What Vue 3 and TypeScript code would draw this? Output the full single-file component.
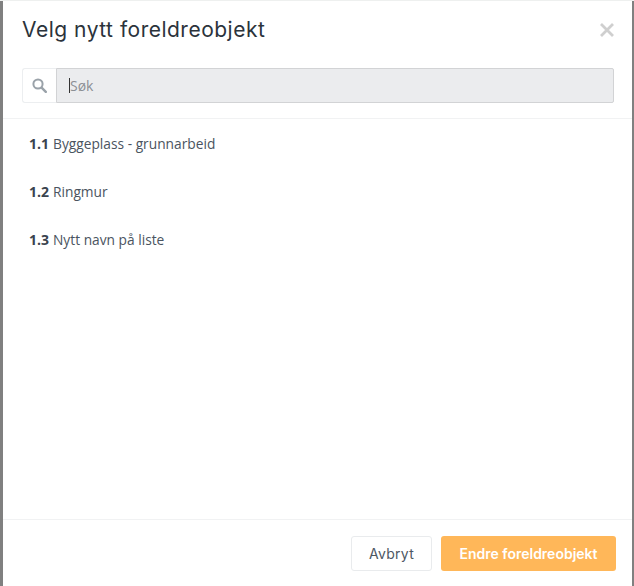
<script setup lang="ts">
const items = [
  { num: '1.1', name: 'Byggeplass - grunnarbeid' },
  { num: '1.2', name: 'Ringmur' },
  { num: '1.3', name: 'Nytt navn på liste' },
]
</script>

<template>
  <div class="backdrop">
    <div class="modal">
      <header class="head">
        <h1 class="title">Velg nytt foreldreobjekt</h1>
        <svg class="close" width="14" height="14" viewBox="0 0 14 14" aria-label="Lukk">
          <path d="M1 1 L13 13 M13 1 L1 13" stroke="#cfcfcf" stroke-width="2.8" fill="none" />
        </svg>
      </header>
      <div class="search">
        <span class="addon">
          <svg width="15" height="15" viewBox="0 0 15 15">
            <circle cx="6" cy="6" r="4.6" stroke="#9aa2a9" stroke-width="2" fill="none" />
            <path d="M9.6 9.6 L13.8 13.8" stroke="#9aa2a9" stroke-width="2.4" stroke-linecap="round" />
          </svg>
        </span>
        <div class="field"><span class="caret"></span><span class="placeholder">Søk</span></div>
      </div>
      <ul class="list">
        <li v-for="item in items" :key="item.num" class="row">
          <b class="num">{{ item.num }}</b> {{ item.name }}
        </li>
      </ul>
      <footer class="foot">
        <button class="btn cancel">Avbryt</button>
        <button class="btn confirm">Endre foreldreobjekt</button>
      </footer>
    </div>
  </div>
</template>

<style scoped>
.backdrop {
  height: 586px;
  width: 634px;
  box-sizing: border-box;
  padding: 1px 2px 0 3px;
  background: linear-gradient(#eef0ef 1px, #808080 1px);
  display: flex;
}
.modal {
  flex: 1;
  background: #fff;
  display: flex;
  flex-direction: column;
  min-width: 0;
}
.head {
  height: 67px;
  box-sizing: border-box;
  padding: 0 18px 10px 19px;
  display: flex;
  align-items: center;
  justify-content: space-between;
}
.title {
  margin: 0;
  font: 400 21px/28px "Inter", "Liberation Sans", sans-serif;
  color: #2b333b;
  letter-spacing: 0.5px;
}
.search {
  margin: 0 18px 0 19px;
  height: 35px;
  display: flex;
  padding-bottom: 15px;
}
.addon {
  width: 34px;
  box-sizing: border-box;
  border: 1px solid #eceef0;
  border-right: 0;
  border-radius: 3px 0 0 3px;
  display: flex;
  align-items: center;
  justify-content: center;
}
.field {
  flex: 1;
  box-sizing: border-box;
  background: #ebecee;
  border: 1px solid #d2d3d5;
  border-radius: 0 2px 2px 0;
  display: flex;
  align-items: center;
  padding-left: 12px;
  font: 400 14px "Open Sans", sans-serif;
  color: #8b8f94;
}
.caret {
  width: 1px;
  height: 15px;
  background: #333;
}
.list {
  list-style: none;
  margin: 0;
  padding: 0 26px;
  border-top: 1px solid #f1f2f3;
  flex: 1;
}
.row {
  height: 48px;
  display: flex;
  align-items: center;
  gap: 4px;
  font: 400 13.75px "Open Sans", sans-serif;
  color: #4a5460;
}
.num {
  font-weight: 700;
  font-size: 14px;
  color: #3a434e;
}
.foot {
  height: 67px;
  box-sizing: border-box;
  border-top: 1px solid #f1f2f3;
  padding: 16px 16px 0 0;
  display: flex;
  justify-content: flex-end;
  gap: 9px;
  align-items: flex-start;
}
.btn {
  height: 35px;
  border-radius: 3px;
  font: 400 14px "Inter", "Liberation Sans", sans-serif;
  padding: 0;
}
.cancel {
  width: 81px;
  background: #fff;
  border: 1px solid #e9ebed;
  color: #4d5763;
  letter-spacing: 0.3px;
}
.confirm {
  width: 175px;
  background: #ffb759;
  border: 0;
  color: #fff;
  font-weight: 600;
}
</style>

<style>
html, body { margin: 0; overflow: hidden; }
</style>
